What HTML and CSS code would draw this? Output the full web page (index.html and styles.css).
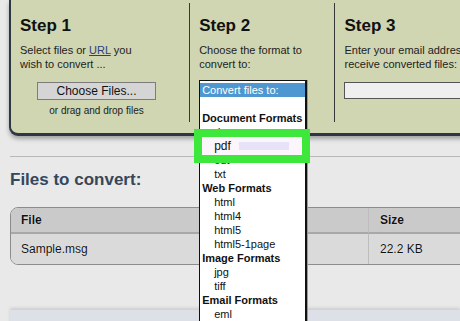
FILE: index.html
```html
<!DOCTYPE html>
<html lang="en">

<head>
    <meta charset="UTF-8">
    <meta name="viewport" content="width=device-width, initial-scale=1.0">
    <title>File Converter</title>
    <link rel="stylesheet" href="styles.css">
</head>

<body>
    <header class="panel">
        <div class="steps">
            <section class="step step-1">
                <h2>Step 1</h2>
                <p class="step-text">Select files or <a href="#">URL</a> you<br>wish to convert ...</p>
                <div class="upload">
                    <button type="button" class="btn-choose">Choose Files...</button>
                    <p class="hint">or drag and drop files</p>
                </div>
            </section>

            <section class="step step-2">
                <h2>Step 2</h2>
                <p class="step-text">Choose the format to<br>convert to:</p>
                <div class="select-wrap">
                    <ul class="format-list">
                        <li class="selected">Convert files to:</li>
                        <li class="empty"></li>
                        <li class="group">Document Formats</li>
                        <li>doc</li>
                        <li>pdf</li>
                        <li>odt</li>
                        <li>txt</li>
                        <li class="group">Web Formats</li>
                        <li>html</li>
                        <li>html4</li>
                        <li>html5</li>
                        <li>html5-1page</li>
                        <li class="group">Image Formats</li>
                        <li>jpg</li>
                        <li>tiff</li>
                        <li class="group">Email Formats</li>
                        <li>eml</li>
                    </ul>
                    <!-- destaque verde por cima da lista -->
                    <div class="highlight">pdf<span class="sel"></span></div>
                </div>
            </section>

            <section class="step step-3">
                <h2>Step 3</h2>
                <p class="step-text">Enter your email address to<br>receive converted files:</p>
                <input type="text" class="email">
            </section>
        </div>
    </header>

    <main class="files">
        <h2 class="files-title">Files to convert:</h2>
        <table class="files-table">
            <thead>
                <tr>
                    <th class="col-file">File</th>
                    <th>Size</th>
                </tr>
            </thead>
            <tbody>
                <tr>
                    <td class="col-file">Sample.msg</td>
                    <td>22.2 KB</td>
                </tr>
            </tbody>
        </table>
    </main>

    <div class="bottom-bar"></div>
</body>

</html>
```

FILE: styles.css
```css
* {
    margin: 0;
    padding: 0;
    box-sizing: border-box;
}

body {
    font-family: 'Liberation Sans', Arial, sans-serif;
    background-color: #e9e9e9;
    color: #222;
    width: 460px;
    height: 321px;
    overflow: hidden;
}

/* painel verde dos passos */
.panel {
    margin-left: 9px;
    width: 470px;
    height: 136px;
    padding-top: 3px;
    background-color: #cfd6b1;
    border-left: 2px solid #2d3844;
    border-bottom: 3px solid #2d3844;
    border-bottom-left-radius: 9px;
    box-shadow: 0 3px 4px rgba(0, 0, 0, 0.3);
}

.steps {
    display: flex;
}

.step {
    height: 119px;
    padding: 13px 0 0 9px;
    border-right: 1px solid #383838;
}

.step-1 {
    width: 180px;
}

.step-2 {
    width: 146px;
}

.step-3 {
    flex: 1;
    border-right: none;
    white-space: nowrap;
}

.step h2 {
    font-size: 17px;
    line-height: 20px;
    color: #111;
}

.step-text {
    margin-top: 7px;
    font-size: 11px;
    line-height: 14px;
    color: #222;
}

.step-text a {
    color: #2e3d80;
}

.upload {
    width: 153px;
    margin-top: 10px;
    text-align: center;
}

.btn-choose {
    width: 119px;
    height: 18px;
    font-family: 'Liberation Sans', Arial, sans-serif;
    font-size: 12px;
    color: #111;
    background-color: #d5d5d5;
    border: 1px solid #7c7c7c;
}

.hint {
    margin-top: 5px;
    font-size: 10px;
    line-height: 12px;
    color: #222;
}

/* lista aberta do select */
.select-wrap {
    position: relative;
    width: 108px;
    height: 18px;
    margin-top: 9px;
}

.format-list {
    position: absolute;
    top: 0;
    left: 0;
    z-index: 2;
    width: 108px;
    height: 260px;
    padding-top: 2px;
    list-style: none;
    background-color: #fff;
    border: 1px solid #111;
    border-right-width: 2px;
    box-shadow: 1px 0 0 #9a9a9a;
    font-size: 11px;
    color: #111;
}

.format-list li {
    height: 14px;
    line-height: 14px;
    padding-left: 14px;
    white-space: nowrap;
}

.format-list li.group {
    padding-left: 2px;
    font-weight: bold;
}

.format-list li.selected {
    padding-left: 2px;
    background-color: #4f97d0;
    color: #fff;
}

.highlight {
    position: absolute;
    top: 49px;
    left: -5px;
    z-index: 3;
    width: 116px;
    height: 34px;
    padding: 1px 0 0 12px;
    border: 8px solid #3ee73c;
    background-color: #fcf6fc;
    font-size: 12px;
    line-height: 16px;
    color: #111;
}

.highlight .sel {
    display: inline-block;
    width: 50px;
    height: 8px;
    margin-left: 8px;
    background-color: #e6e2f8;
}

.email {
    display: block;
    width: 130px;
    height: 17px;
    margin-top: 11px;
    border: 1px solid #555;
    background-color: #efefef;
}

/* arquivos */
.files {
    margin: 20px 0 0 10px;
    padding-top: 13px;
    border-top: 1px solid #b8b8b8;
}

.files-title {
    font-size: 17px;
    line-height: 20px;
    color: #35475b;
}

.files-table {
    width: 470px;
    margin-top: 17px;
    border-collapse: separate;
    border-spacing: 0;
    border: 1px solid #8c8c8c;
    border-radius: 8px 0 0 8px;
    overflow: hidden;
    font-size: 12px;
    color: #111;
    text-shadow: 0 0 1px #fff;
}

.files-table th {
    height: 26px;
    padding-left: 11px;
    text-align: left;
    background-color: #cacaca;
    border-bottom: 2px solid #a8a8a8;
}

.files-table td {
    height: 30px;
    padding-left: 11px;
    background-color: #dadada;
}

.files-table .col-file {
    width: 358px;
    padding-left: 10px;
    border-right: 1px solid #bdbdbd;
}

.bottom-bar {
    height: 20px;
    margin: 45px 0 0 10px;
    background-color: #dde1e7;
    box-shadow: 0 -2px 3px rgba(0, 0, 0, 0.12);
}
```
